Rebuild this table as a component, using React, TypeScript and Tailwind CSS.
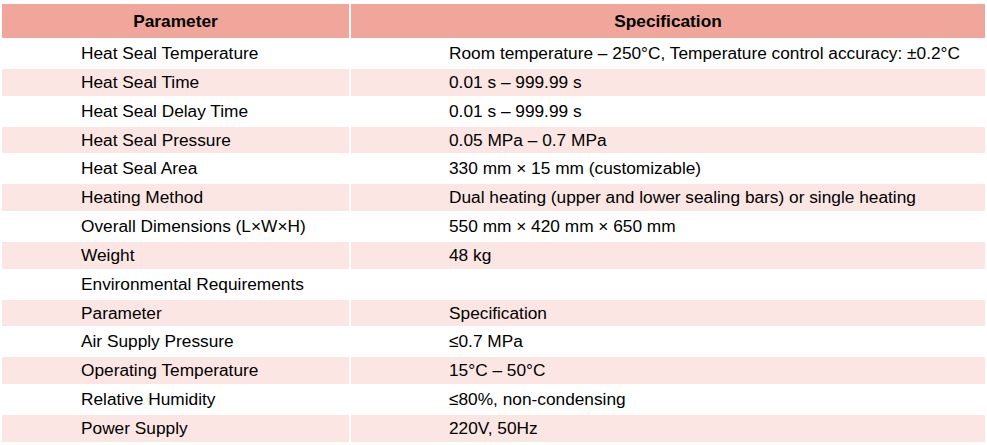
const rows: [string, string][] = [
  ["Heat Seal Temperature", "Room temperature – 250°C, Temperature control accuracy: ±0.2°C"],
  ["Heat Seal Time", "0.01 s – 999.99 s"],
  ["Heat Seal Delay Time", "0.01 s – 999.99 s"],
  ["Heat Seal Pressure", "0.05 MPa – 0.7 MPa"],
  ["Heat Seal Area", "330 mm × 15 mm (customizable)"],
  ["Heating Method", "Dual heating (upper and lower sealing bars) or single heating"],
  ["Overall Dimensions (L×W×H)", "550 mm × 420 mm × 650 mm"],
  ["Weight", "48 kg"],
  ["Environmental Requirements", ""],
  ["Parameter", "Specification"],
  ["Air Supply Pressure", "≤0.7 MPa"],
  ["Operating Temperature", "15°C – 50°C"],
  ["Relative Humidity", "≤80%, non-condensing"],
  ["Power Supply", "220V, 50Hz"],
];

const App = () => {
  return (
    <main className="min-h-screen bg-white font-['Liberation_Sans',Arial,sans-serif] text-[17.3px] text-black">
      <table className="mt-[2px] w-[987px] table-fixed border-separate border-spacing-[2px]">
        <colgroup>
          <col className="w-[347px]" />
          <col />
        </colgroup>
        <thead>
          <tr className="bg-[#f0a69b]">
            <th className="p-0 pt-px text-center font-bold leading-[33px]">Parameter</th>
            <th className="p-0 pt-px text-center font-bold leading-[33px]">Specification</th>
          </tr>
        </thead>
        <tbody>
          {rows.map(([param, spec], i) => (
            <tr key={i} className={i % 2 === 1 ? "bg-[#fbe6e3]" : "bg-white"}>
              <td className="whitespace-nowrap pt-[1px] pb-0 pl-[79px] pr-2 text-left leading-[25.85px]">
                {param}
              </td>
              <td className="whitespace-nowrap pt-[1px] pb-0 pl-[98px] pr-2 text-left leading-[25.85px]">
                {spec}
              </td>
            </tr>
          ))}
        </tbody>
      </table>
    </main>
  );
};

export default App;
